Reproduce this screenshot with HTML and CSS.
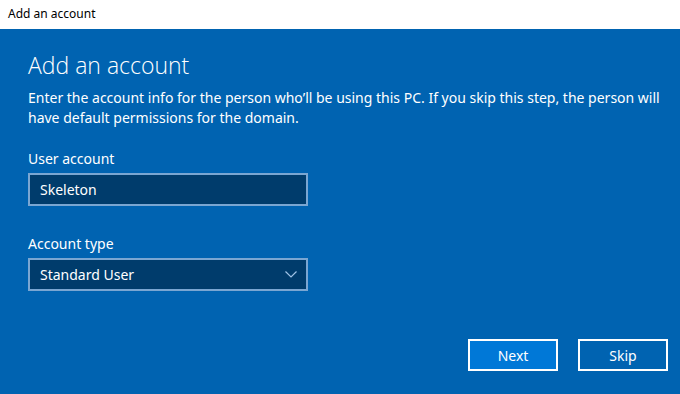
FILE: index.html
```html
<!DOCTYPE html>
<html>
<head>
<meta charset="utf-8">
<link rel="stylesheet" href="styles.css">
</head>
<body>
<div class="titlebar">Add an account</div>
<div class="page">
  <h1 class="heading">Add an account</h1>
  <p class="intro">Enter the account info for the person who’ll be using this PC. If you skip this step, the person will have default permissions for the domain.</p>
  <div class="field">
    <label class="label">User account</label>
    <div class="box">Skeleton</div>
  </div>
  <div class="field field-second">
    <label class="label">Account type</label>
    <div class="box select">
      <span>Standard User</span>
      <svg class="chev" width="12" height="7" viewBox="0 0 12 7"><path d="M0.5 0.5 L6 6 L11.5 0.5" fill="none" stroke="#9fc3e6" stroke-width="1.2"/></svg>
    </div>
  </div>
  <div class="spacer"></div>
  <div class="actions">
    <button class="btn btn-primary">Next</button>
    <button class="btn">Skip</button>
  </div>
</div>
</body>
</html>
```

FILE: styles.css
```css
html, body {
  margin: 0;
  padding: 0;
  width: 680px;
  height: 394px;
  overflow: hidden;
  font-family: "Noto Sans", "Open Sans", sans-serif;
}
.titlebar {
  height: 29px;
  background: #ffffff;
  color: #000;
  font-size: 12px;
  line-height: 27px;
  padding-left: 8px;
  box-sizing: border-box;
}
.page {
  height: 365px;
  background: #0063b1;
  color: #ffffff;
  padding: 0 12px 23px 28px;
  box-sizing: border-box;
  display: flex;
  flex-direction: column;
}
.heading {
  margin: 20px 0 0 0;
  font-size: 23px;
  font-weight: 300;
  line-height: 32px;
  font-family: "Open Sans", "Noto Sans", sans-serif;
}
.intro {
  margin: 7px 0 0 0;
  font-size: 14px;
  line-height: 20px;
  width: 645px;
}
.field {
  margin-top: 21px;
  display: flex;
  flex-direction: column;
}
.field-second {
  margin-top: 28px;
}
.label {
  font-size: 14px;
  line-height: 20px;
  height: 20px;
}
.box {
  margin-top: 4px;
  width: 280px;
  height: 33px;
  box-sizing: border-box;
  border: 2px solid #7aa6d2;
  background: #003c6c;
  padding-left: 10px;
  font-size: 14px;
  line-height: 29px;
  display: flex;
  align-items: center;
}
.select {
  justify-content: space-between;
  padding-right: 9px;
}
.chev {
  display: block;
}
.spacer {
  flex: 1;
}
.actions {
  display: flex;
  justify-content: flex-end;
  gap: 20px;
}
.btn {
  width: 90px;
  height: 32px;
  border: 2px solid #ffffff;
  background: #0063b1;
  color: #ffffff;
  font-family: "Noto Sans", "Open Sans", sans-serif;
  font-size: 14px;
  padding: 0;
}
.btn-primary {
  background: #0078d7;
}
```
